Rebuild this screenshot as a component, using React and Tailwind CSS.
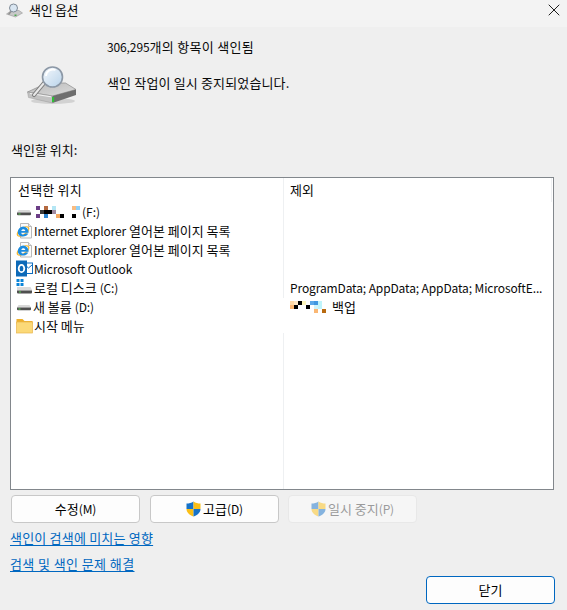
import React from "react";
import { X } from "lucide-react";

const font = { fontFamily: "'Noto Sans CJK KR', 'Noto Sans', sans-serif" };

const Pixels = ({ cells, w, h }) => (
  <svg width={w} height={h} viewBox={`0 0 ${w} ${h}`} shapeRendering="crispEdges" className="shrink-0">
    {cells.map(([x, y, c, cw = 4, ch = 4], i) => (
      <rect key={i} x={x} y={y} width={cw} height={ch} fill={c} />
    ))}
  </svg>
);

const SmallDrive = () => (
  <svg width="16" height="16" viewBox="0 0 16 16" className="shrink-0">
    <path d="M2.500 6h11l1.500 2.500H1z" fill="#d8d8d8" />
    <path d="M1 8.500h14v1.800a1 1 0 0 1-1 1H2a1 1 0 0 1-1-1z" fill="#4f4f4f" />
    <rect x="2.500" y="9.500" width="2" height="1" fill="#5ad455" />
  </svg>
);

const WinDrive = () => (
  <svg width="17" height="17" viewBox="0 0 17 17" className="shrink-0">
    <rect x="0.500" y="0" width="3" height="3" fill="#0a84d8" />
    <rect x="4.500" y="0" width="3" height="3" fill="#0a84d8" />
    <rect x="0.500" y="4" width="3" height="3" fill="#0a84d8" />
    <rect x="4.500" y="4" width="3" height="3" fill="#0a84d8" />
    <path d="M1 8h13.500l1.500 3v.5H1z" fill="#dadada" />
    <path d="M1 11.500h15v2a1 1 0 0 1-1 1H2a1 1 0 0 1-1-1z" fill="#4f4f4f" />
    <rect x="3" y="12.500" width="2" height="1" fill="#5ad455" />
  </svg>
);

const IeIcon = () => (
  <svg width="17" height="17" viewBox="0 0 17 17" className="shrink-0">
    <path d="M4.500 1.500h8l3 3v11.500h-11z" fill="#fbfbfb" stroke="#b9b9b9" />
    <path d="M12.500 1.500v3h3" fill="#e8e8e8" stroke="#b9b9b9" />
    <ellipse cx="7" cy="9.500" rx="6.600" ry="3.200" fill="none" stroke="#f5b72e" strokeWidth="1.300" transform="rotate(-35 7 9.500)" />
    <path d="M1.800 10a5.400 5.400 0 0 1 10.800 0v.8H5.200c.3 2.400 3.300 2.400 4.400.7h2.700c-1.700 4.300-10.500 4.300-10.500-1.500zm3.500-1.100h4c-.3-2.100-3.600-2.100-4 0z" fill="#1c8ce0" />
  </svg>
);

const OutlookIcon = () => (
  <svg width="17" height="17" viewBox="0 0 17 17" className="shrink-0">
    <rect x="8" y="3" width="8.500" height="10.500" fill="#fff" stroke="#0f6cbd" />
    <path d="M9 5l3.500 3L16 5" fill="none" stroke="#0f6cbd" />
    <rect x="0" y="0.500" width="11" height="16" fill="#0d6ab8" />
    <ellipse cx="5.500" cy="8.500" rx="2.800" ry="3.600" fill="none" stroke="#fff" strokeWidth="1.800" />
  </svg>
);

const FolderIcon = () => (
  <svg width="17" height="16" viewBox="0 0 17 16" className="shrink-0">
    <path d="M0.500 1h6l2 2h8v3H0.500z" fill="#eeb02c" />
    <rect x="0.500" y="4" width="16" height="11" fill="#fbd978" stroke="#e8b64c" strokeWidth="0.700" />
  </svg>
);

const Shield = ({ dim }) => (
  <svg width="15" height="16" viewBox="0 0 15 16" className={dim ? "shrink-0 opacity-50" : "shrink-0"}>
    <path d="M7.500 0.500C5.500 2 3 2.500 0.500 2.500V8h7z" fill="#1673c9" />
    <path d="M7.500 0.500C9.500 2 12 2.500 14.500 2.500V8H7.500z" fill="#fbbf16" />
    <path d="M0.500 8h7v7.500C3.500 14 0.500 11.500 0.500 8z" fill="#fbbf16" />
    <path d="M7.500 8h7c0 3.500-3 6-7 7.500z" fill="#1673c9" />
  </svg>
);

const BigDrive = () => (
  <svg width="50" height="40" viewBox="0 0 50 40" className="shrink-0">
    <defs>
      <linearGradient id="dr" x1="0" y1="0" x2="1" y2="1">
        <stop offset="0" stopColor="#b9b9b9" />
        <stop offset="1" stopColor="#dcdcdc" />
      </linearGradient>
      <linearGradient id="lens" x1="0" y1="0" x2="1" y2="1">
        <stop offset="0" stopColor="#f4f8fc" />
        <stop offset="1" stopColor="#b9d3ea" />
      </linearGradient>
    </defs>
    <ellipse cx="26" cy="36" rx="22" ry="3" fill="#000" opacity="0.120" />
    <path d="M0.500 27L20 18h18.500L49 24.500 25.500 31z" fill="url(#dr)" stroke="#8d8d8d" strokeWidth="0.700" strokeLinejoin="round" />
    <path d="M0.500 27l25 4v7L1.500 32.500z" fill="#c2c2c2" stroke="#8d8d8d" strokeWidth="0.400" />
    <path d="M25.500 31L49 24.500V30L25.500 38z" fill="#6e6e6e" />
    <path d="M3 28.500l21 3.300" stroke="#f2f2f2" strokeWidth="1" />
    <rect x="25" y="32" width="2.200" height="5" fill="#2fbf36" />
    <path d="M7 30l10-12" stroke="#7f7f7f" strokeWidth="4.200" strokeLinecap="round" />
    <path d="M7 30l10-12" stroke="#e8e8e8" strokeWidth="2" strokeLinecap="round" />
    <circle cx="25.500" cy="12" r="10" fill="url(#lens)" stroke="#8c98a6" strokeWidth="1.600" />
    <path d="M19 11a7 7 0 0 1 9.500-6" fill="none" stroke="#fff" strokeWidth="1.800" />
  </svg>
);

const TitleIcon = () => (
  <svg width="17" height="16" viewBox="0 0 17 16" className="shrink-0">
    <path d="M0.500 12l5-3.500h7.500l3.500 2.500-7 4z" fill="#c9c9c9" stroke="#8a8a8a" strokeWidth="0.500" />
    <path d="M2.500 12.500l3-3.500" stroke="#8f8f8f" strokeWidth="1.500" />
    <rect x="8.500" y="12.500" width="2" height="1.500" fill="#4aa84e" />
    <circle cx="7.500" cy="6" r="4" fill="#d9e6f2" stroke="#7f8a96" />
  </svg>
);

// latin runs are set a bit smaller than the hangul around them
const L = ({ children }) => <span className="text-[12px] tracking-[-0.12px]">{children}</span>;

const Row = ({ icon, children }) => (
  <div className="flex h-[19px] items-center gap-px pl-[5px] whitespace-nowrap">
    {icon}
    <span>{children}</span>
  </div>
);

const DialogButton = ({ children, disabled, primary, className = "" }) => (
  <button
    className={
      "flex h-[28px] w-[129px] items-center justify-center rounded-[4px] border " +
      (disabled
        ? "border-[#e8e8e8] bg-[#f6f6f6] text-[#9b9b9b] "
        : primary
        ? "border-[#0067c0] bg-[#fdfdfd] text-black "
        : "border-[#c8c8c8] bg-[#fdfdfd] text-black ") +
      className
    }
  >
    {children}
  </button>
);

const fDrivePixels = [
  [1, 0, "#6b3d86"], [9, 0, "#b4693f"], [17, 0, "#b4e6f4"], [5, 4, "#3a3a3a"],
  [9, 4, "#000"], [13, 4, "#000"], [17, 4, "#a08aa0"], [1, 8, "#6b3d86"], [9, 8, "#2d84d0"],
  [21, 8, "#f5a860"], [25, 8, "#000"], [37, 8, "#000"], [37, 0, "#f9bb80"], [41, 0, "#8fd0f8"],
];

const backupPixels = [
  [0, 0, "#ffd9a8"], [4, 0, "#ffe7c4"], [8, 0, "#000"], [12, 0, "#fff7bd"], [20, 0, "#5aa8e8"], [24, 0, "#4097e0"],
  [28, 0, "#bff4fb"], [0, 4, "#fab774"], [4, 4, "#000"], [16, 4, "#000"], [24, 4, "#d0f4fa"], [28, 4, "#bff4fb"],
  [24, 8, "#fab774"], [32, 8, "#b86a10"],
];

export default function App() {
  return (
    <div className="flex h-[610px] w-[567px] flex-col overflow-hidden bg-[#efefef] text-[13px] leading-[16px] text-[#0a0a0a]" style={font}>
      <div className="flex h-[27px] shrink-0 items-start justify-between bg-[#f3f3f3] pl-[6px] pr-[3px] pt-[2px]">
        <div className="flex items-center gap-[6px]">
          <TitleIcon />
          <span className="tracking-[-0.3px]">색인 옵션</span>
        </div>
        <X size={20} strokeWidth={1.1} className="-mt-[2px]" />
      </div>

      <div className="flex h-[86px] shrink-0">
        <div className="w-[107px] pl-[27px] pt-[38px]">
          <BigDrive />
        </div>
        <div className="flex flex-col pt-[12px]">
          <span className="tracking-[0.3px]"><L>306,295</L>개의 항목이 색인됨</span>
          <span className="mt-[20px] tracking-[0.15px]">색인 작업이 일시 중지되었습니다.</span>
        </div>
      </div>

      <div className="mt-[29px] pl-[11px]">색인할 위치:</div>

      <div className="mx-[10px] mt-[19px] flex h-[313px] w-[544px] shrink-0 border border-[#82878c] bg-white">
        <div className="flex w-[272px] flex-col">
          <div className="h-[24px] pl-[7px] pt-[4px] tracking-[0.2px]">선택한 위치</div>
          <Row icon={<SmallDrive />}>
            <span className="flex items-center">
              <span className="ml-[2px]"><Pixels w={45} h={12} cells={fDrivePixels} /></span>
              <span className="ml-[2px] text-[12px]">(F:)</span>
            </span>
          </Row>
          <Row icon={<IeIcon />}><L>Internet Explorer</L> 열어본 페이지 목록</Row>
          <Row icon={<IeIcon />}><L>Internet Explorer</L> 열어본 페이지 목록</Row>
          <Row icon={<OutlookIcon />}><L>Microsoft Outlook</L></Row>
          <Row icon={<WinDrive />}>로컬 디스크 <L>(C:)</L></Row>
          <Row icon={<SmallDrive />}>새 볼륨 <L>(D:)</L></Row>
          <Row icon={<FolderIcon />}>시작 메뉴</Row>
        </div>

        <div className="flex w-px flex-col">
          <div className="h-[120px] bg-[#eef0f2]" />
          <div className="h-[35px]" />
          <div className="flex-1 bg-[#eef0f2]" />
        </div>

        <div className="flex min-w-0 flex-1 flex-col pl-[6px]">
          <div className="mr-px h-[24px] border-r border-[#eef0f2] pt-[4px]">제외</div>
          <div className="h-[76px]" />
          <div className="flex h-[19px] items-center whitespace-nowrap"><L>ProgramData; AppData; AppData; MicrosoftE...</L></div>
          <div className="flex h-[19px] items-center gap-[6px] whitespace-nowrap">
            <Pixels w={36} h={12} cells={backupPixels} />
            <span>백업</span>
          </div>
        </div>
      </div>

      <div className="mt-[5px] flex gap-[10px] pl-[11px]">
        <DialogButton>수정<L>(M)</L></DialogButton>
        <DialogButton><Shield /><span className="ml-[2px]">고급<L>(D)</L></span></DialogButton>
        <DialogButton disabled className="-ml-px"><Shield dim /><span className="ml-[2px]">일시 중지<L>(P)</L></span></DialogButton>
      </div>

      <a className="mt-[7px] ml-[10px] w-fit tracking-[0.2px] text-[#0067c0] underline underline-offset-2">색인이 검색에 미치는 영향</a>
      <a className="mt-[10px] ml-[10px] w-fit tracking-[0.4px] text-[#0067c0] underline underline-offset-2">검색 및 색인 문제 해결</a>

      <div className="mt-[4px] flex justify-end pr-[12px]">
        <DialogButton primary>닫기</DialogButton>
      </div>
    </div>
  );
}
